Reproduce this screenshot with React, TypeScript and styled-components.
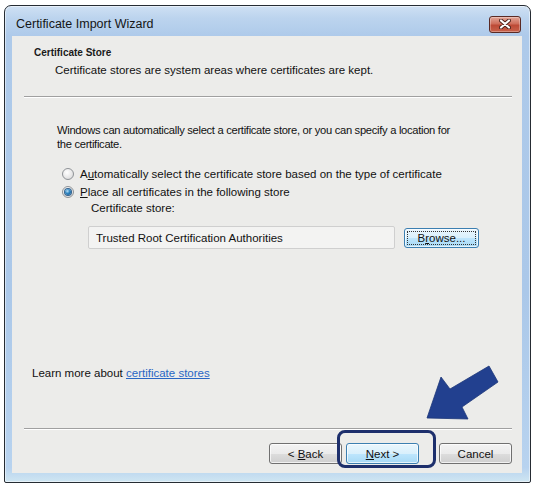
import React from "react";
import styled, { createGlobalStyle } from "styled-components";

const Global = createGlobalStyle`
  html, body { margin: 0; padding: 0; background: #ffffff; }
  body {
    font-family: "Liberation Sans", Arial, sans-serif;
    font-size: 11.5px;
    color: #111;
  }
  #root { padding: 5px 0 0 4px; }
  * { box-sizing: border-box; }
`;

const Window = styled.div`
  width: 527px;
  height: 478px;
  border: 1px solid #262c33;
  border-radius: 7px 7px 2px 2px;
  background: linear-gradient(
    180deg,
    #cfe0f3 0px,
    #bcd4ee 12px,
    #aecaea 30px,
    #abc8e9 60%,
    #b8d3ef 97%,
    #cfe6f2 100%
  );
  box-shadow: inset 0 0 0 1px rgba(255, 255, 255, 0.5);
  display: flex;
  flex-direction: column;
`;

const TitleBar = styled.div`
  height: 30px;
  flex: none;
  display: flex;
  align-items: center;
  justify-content: space-between;
  padding: 6px 9px 0 11px;
`;

const Title = styled.span`
  font-size: 12.5px;
  color: #151515;
`;

const CloseButton = styled.div`
  width: 32px;
  height: 17px;
  border: 1px solid #5a2a24;
  border-radius: 3px;
  background: linear-gradient(
    180deg,
    #e2a597 0%,
    #cf6e5b 45%,
    #bd4a36 55%,
    #c8624b 100%
  );
  box-shadow: inset 0 0 0 1px rgba(255, 255, 255, 0.3);
  display: flex;
  align-items: center;
  justify-content: center;
`;

const Panel = styled.div`
  flex: 1;
  margin: 0 8px 9px 7px;
  background: #ececea;
  position: relative;
  display: flex;
  flex-direction: column;
`;

const Header = styled.div`
  padding: 10px 0 0 22px;
`;

const HeaderTitle = styled.div`
  font-size: 10px;
  font-weight: bold;
  line-height: 14px;
  color: #1a1a1a;
`;

const HeaderText = styled.div`
  margin: 2px 0 0 21px;
  line-height: 16px;
`;

const Separator = styled.div<{ $top: number }>`
  margin: ${(p) => p.$top}px 10px 0 12px;
  height: 2px;
  border-top: 1px solid #a0a0a0;
  border-bottom: 1px solid #ffffff;
  flex: none;
`;

const Paragraph = styled.p`
  margin: 25px 0 0 45px;
  line-height: 14px;
  font-size: 11.2px;
  letter-spacing: -0.3px;
`;

const RadioList = styled.div`
  margin: 14px 0 0 50px;
  display: flex;
  flex-direction: column;
`;

const RadioRow = styled.label`
  height: 18px;
  display: flex;
  align-items: center;
  gap: 6px;
`;

const RadioCircle = styled.span<{ $checked?: boolean }>`
  width: 12px;
  height: 12px;
  border-radius: 50%;
  border: 1px solid #8f9397;
  background: radial-gradient(circle at 40% 35%, #ffffff 0%, #e6e6e6 60%, #cfd1d3 100%);
  display: flex;
  align-items: center;
  justify-content: center;
  flex: none;
  &::after {
    content: "";
    display: ${(p) => (p.$checked ? "block" : "none")};
    width: 6px;
    height: 6px;
    border-radius: 50%;
    background: radial-gradient(circle at 40% 35%, #b9e0f7 0%, #2c83c0 45%, #0e4f84 100%);
    box-shadow: 0 0 0 1px #32628e;
  }
`;

const Key = styled.span`
  text-decoration: underline;
`;

const StoreSection = styled.div`
  margin: 0 0 0 76px;
  display: flex;
  flex-direction: column;
`;

const StoreLabel = styled.div`
  padding-left: 3px;
  line-height: 14px;
`;

const StoreRow = styled.div`
  margin-top: 11px;
  display: flex;
  align-items: center;
  gap: 9px;
`;

const TextBox = styled.div`
  width: 307px;
  height: 23px;
  border: 1px solid #cfcfcf;
  border-radius: 2px;
  background: #f3f3f2;
  padding: 0 0 0 7px;
  display: flex;
  align-items: center;
`;

const Button = styled.div<{ $variant?: "normal" | "hover" | "focus"; $w: number }>`
  position: relative;
  width: ${(p) => p.$w}px;
  height: ${(p) => (p.$variant === "focus" ? 20 : 21)}px;
  border-radius: 3px;
  border: 1px solid ${(p) => (p.$variant === "normal" ? "#707070" : "#3c7fb1")};
  background: ${(p) =>
    p.$variant === "normal"
      ? "linear-gradient(180deg, #f3f3f3 0%, #ebebeb 50%, #dddddd 51%, #cfcfcf 100%)"
      : "linear-gradient(180deg, #eaf6fd 0%, #d9f0fc 50%, #bee6fd 51%, #a7d9f5 100%)"};
  box-shadow: inset 0 0 0 1px rgba(255, 255, 255, 0.7);
  display: flex;
  align-items: center;
  justify-content: center;
  color: #111;
  flex: none;
  white-space: pre;
  &::after {
    content: "";
    display: ${(p) => (p.$variant === "focus" ? "block" : "none")};
    position: absolute;
    inset: 2px;
    border: 1px dotted #333;
  }
`;

const Spacer = styled.div`
  flex: 1;
`;

const LearnMore = styled.div`
  margin-left: 20px;
  line-height: 16px;
`;

const Link = styled.a`
  color: #2a66c4;
  text-decoration: underline;
`;

const ButtonRow = styled.div`
  margin-top: 13px;
  padding: 0 10px 9px 0;
  display: flex;
  justify-content: flex-end;
  gap: 4px;
`;

const CancelGap = styled.div`
  width: 12px;
`;

const Highlight = styled.div`
  position: absolute;
  left: 325px;
  top: 394px;
  width: 99px;
  height: 38px;
  border: 3px solid #1d2f6c;
  border-radius: 8px;
  pointer-events: none;
`;

const Arrow = styled.svg`
  position: absolute;
  left: 408px;
  top: 324px;
  pointer-events: none;
`;

export default function App() {
  return (
    <>
      <Global />
      <Window>
        <TitleBar>
          <Title>Certificate Import Wizard</Title>
          <CloseButton>
            <svg width="12" height="10" viewBox="0 0 12 10">
              <path
                d="M2 1.5 L10 8.5 M10 1.5 L2 8.5"
                stroke="#4a2019"
                strokeWidth="4"
                strokeLinecap="round"
              />
              <path
                d="M2 1.5 L10 8.5 M10 1.5 L2 8.5"
                stroke="#ffffff"
                strokeWidth="2.2"
                strokeLinecap="round"
              />
            </svg>
          </CloseButton>
        </TitleBar>
        <Panel>
          <Header>
            <HeaderTitle>Certificate Store</HeaderTitle>
            <HeaderText>Certificate stores are system areas where certificates are kept.</HeaderText>
          </Header>
          <Separator $top={18} />
          <Paragraph>
            Windows can automatically select a certificate store, or you can specify a location for
            <br />
            the certificate.
          </Paragraph>
          <RadioList>
            <RadioRow>
              <RadioCircle />
              <span>
                A<Key>u</Key>tomatically select the certificate store based on the type of certificate
              </span>
            </RadioRow>
            <RadioRow>
              <RadioCircle $checked />
              <span>
                <Key>P</Key>lace all certificates in the following store
              </span>
            </RadioRow>
          </RadioList>
          <StoreSection>
            <StoreLabel>Certificate store:</StoreLabel>
            <StoreRow>
              <TextBox>Trusted Root Certification Authorities</TextBox>
              <Button $variant="focus" $w={75}>
                <span>
                  B<Key>r</Key>owse...
                </span>
              </Button>
            </StoreRow>
          </StoreSection>
          <Spacer />
          <LearnMore>
            Learn more about <Link>certificate stores</Link>
          </LearnMore>
          <Separator $top={47} />
          <ButtonRow>
            <Button $variant="normal" $w={73}>
              <span>
                {"< "}
                <Key>B</Key>ack
              </span>
            </Button>
            <Button $variant="hover" $w={73}>
              <span>
                <Key>N</Key>
                {"ext >"}
              </span>
            </Button>
            <CancelGap />
            <Button $variant="normal" $w={73}>
              <span>Cancel</span>
            </Button>
          </ButtonRow>
          <Highlight />
          <Arrow width="84" height="64" viewBox="0 0 84 64">
            <polygon
              points="7,58 21,17 30,29 69,6 78,22 42,47 48,59"
              fill="#22408f"
              stroke="#1c3678"
              strokeWidth="0.8"
              strokeLinejoin="round"
            />
          </Arrow>
        </Panel>
      </Window>
    </>
  );
}
